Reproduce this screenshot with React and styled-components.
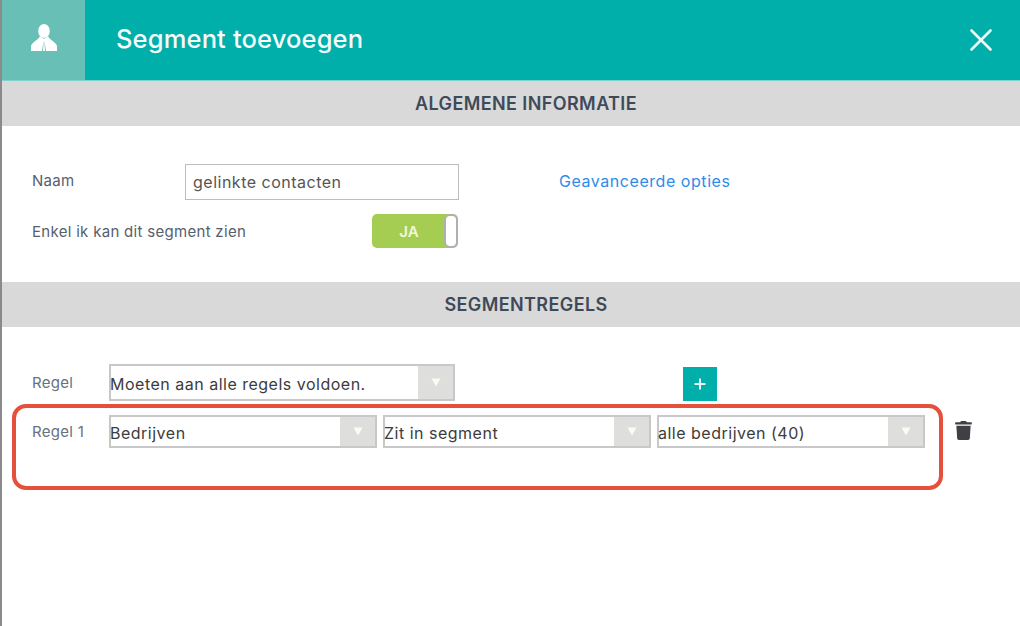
import React from "react";
import styled, { createGlobalStyle } from "styled-components";
import { FaTrash } from "react-icons/fa";

const Global = createGlobalStyle`
  html, body {
    margin: 0;
    padding: 0;
    background: #fff;
    overflow: hidden;
  }
  * { box-sizing: border-box; }
`;

const PersonIcon = () => (
  <svg width="28" height="28" viewBox="0 0 28 28" fill="#fff">
    <ellipse cx="14" cy="7" rx="5.8" ry="7" />
    <path d="M10 12 L14 15 L18 12 C19 15.5 26 18 27 22 L27 27 L1 27 L1 22 C2 18 9 15.5 10 12 Z" />
    <path fill="#68bfb5" d="M13.7 16 L12 27 L13 27 Z M14.3 16 L16 27 L15 27 Z" />
  </svg>
);

const Select = ({ width, value }) => (
  <SelectBox $width={width}>
    <SelectValue>{value}</SelectValue>
    <SelectArrow>
      <svg width="10" height="9" viewBox="0 0 10 9" fill="#fbfbf2">
        <path d="M0.5 0.5 L9.5 0.5 L5 8.5 Z" />
      </svg>
    </SelectArrow>
  </SelectBox>
);

export default function App() {
  return (
    <Page>
      <Global />
      <Header>
        <IconTile>
          <PersonIcon />
        </IconTile>
        <Title>Segment toevoegen</Title>
        <Close>
          <svg width="22" height="22" viewBox="0 0 22 22" stroke="#eef9f8" strokeWidth="2.6" strokeLinecap="round">
            <path d="M1.5 1.5 L20.5 20.5 M20.5 1.5 L1.5 20.5" />
          </svg>
        </Close>
      </Header>

      <Band>ALGEMENE INFORMATIE</Band>
      <InfoSection>
        <InfoRow>
          <InfoLabel>Naam</InfoLabel>
          <NameInput>gelinkte contacten</NameInput>
          <OptionsLink>Geavanceerde opties</OptionsLink>
        </InfoRow>
        <ToggleRow>
          <ToggleLabel>Enkel ik kan dit segment zien</ToggleLabel>
          <Toggle>
            <ToggleText>JA</ToggleText>
            <Knob />
          </Toggle>
        </ToggleRow>
      </InfoSection>

      <Band>SEGMENTREGELS</Band>
      <RulesSection>
        <RuleHead>
          <RuleLabel>Regel</RuleLabel>
          <Select width={346} value="Moeten aan alle regels voldoen." />
          <AddButton>
            <svg width="12" height="12" viewBox="0 0 12 12" stroke="#e6f6f4" strokeWidth="2">
              <path d="M6 0.5 V11.5 M0.5 6 H11.5" />
            </svg>
          </AddButton>
        </RuleHead>
        <RuleRow>
          <Highlight />
          <RuleLabel>Regel 1</RuleLabel>
          <Select width={268} value="Bedrijven" />
          <Select width={268} value="Zit in segment" />
          <Select width={268} value="alle bedrijven (40)" />
          <TrashButton>
            <FaTrash size={19} />
          </TrashButton>
        </RuleRow>
      </RulesSection>
    </Page>
  );
}

const Page = styled.div`
  width: 1020px;
  height: 626px;
  border-left: 2px solid #8a8a8a;
  background: #fff;
  font-family: "Inter", "Lato", sans-serif;
  overflow: hidden;
`;

const Header = styled.header`
  height: 81px;
  display: flex;
  align-items: center;
  background: #00aeaa;
  border-bottom: 1px solid #7fd3cf;
`;

const IconTile = styled.div`
  width: 83px;
  height: 100%;
  display: flex;
  align-items: center;
  justify-content: center;
  padding-bottom: 5px;
  background: #68bfb5;
`;

const Title = styled.h1`
  margin: 0 0 3px 31px;
  font-size: 25.5px;
  font-weight: 500;
  letter-spacing: 0.15px;
  color: #f4fbfb;
`;

const Close = styled.div`
  margin-left: auto;
  margin-right: 28px;
  display: flex;
`;

const Band = styled.div`
  height: 45px;
  display: flex;
  align-items: center;
  justify-content: center;
  padding: 0 0 0 30px;
  background: #d9d9d9;
  color: #3f4a59;
  font-size: 18px;
  font-weight: 600;
  letter-spacing: 0.4px;
`;

const InfoSection = styled.section`
  height: 156px;
  padding: 38px 0 0 30px;
`;

const InfoRow = styled.div`
  display: flex;
  align-items: center;
  height: 36px;
`;

const InfoLabel = styled.span`
  width: 153px;
  font-size: 15px;
  letter-spacing: 0.3px;
  color: #56606d;
  position: relative;
  top: -2px;
`;

const NameInput = styled.div`
  width: 274px;
  height: 36px;
  display: flex;
  align-items: center;
  padding-left: 7px;
  border: 1px solid #bdbdbd;
  font-size: 16px;
  letter-spacing: 0.5px;
  color: #555;
`;

const OptionsLink = styled.a`
  margin-left: 100px;
  font-size: 16px;
  letter-spacing: 0.55px;
  color: #2d8ceb;
  position: relative;
  top: -1px;
`;

const ToggleRow = styled.div`
  display: flex;
  align-items: center;
  justify-content: space-between;
  width: 426px;
  height: 34px;
  margin-top: 14px;
`;

const ToggleLabel = styled.span`
  font-size: 15px;
  letter-spacing: 0.3px;
  color: #56606d;
`;

const Toggle = styled.div`
  width: 86px;
  height: 34px;
  display: flex;
  border-radius: 5px;
  background: #a5cd52;
  overflow: hidden;
`;

const ToggleText = styled.span`
  flex: 1;
  display: flex;
  align-items: center;
  justify-content: center;
  padding-left: 2px;
  color: #f1f7df;
  font-size: 15px;
  font-weight: 600;
`;

const Knob = styled.span`
  width: 14px;
  background: #fff;
  border: 2px solid #b0b0b0;
  border-radius: 6px;
`;

const RulesSection = styled.section`
  padding: 37px 0 0 30px;
`;

const RuleHead = styled.div`
  display: flex;
  height: 37px;
  align-items: center;
  position: relative;
`;

const RuleLabel = styled.span`
  width: 77px;
  font-size: 15px;
  letter-spacing: 0.3px;
  color: #66717e;
`;

const SelectBox = styled.div`
  width: ${({ $width }) => $width}px;
  height: 100%;
  display: flex;
  border: 2px solid #c8c8c8;
  background: #fff;
`;

const SelectValue = styled.span`
  flex: 1;
  display: flex;
  align-items: center;
  padding-top: 2px;
  margin-left: -1px;
  font-size: 16px;
  letter-spacing: 0.5px;
  color: #3c3c3c;
`;

const SelectArrow = styled.span`
  width: 35px;
  display: flex;
  align-items: center;
  justify-content: center;
  background: #dededc;
`;

const AddButton = styled.button`
  width: 34px;
  height: 34px;
  margin: 3px 0 0 228px;
  padding: 0;
  display: flex;
  align-items: center;
  justify-content: center;
  border: none;
  background: #00aeaa;
`;

const RuleRow = styled.div`
  display: flex;
  align-items: center;
  gap: 6px;
  height: 33px;
  margin-top: 14px;
  position: relative;

  ${RuleLabel} {
    width: 71px;
  }
`;

const Highlight = styled.div`
  position: absolute;
  left: -20px;
  top: -11px;
  width: 931px;
  height: 86px;
  border: 4px solid #e5503c;
  border-radius: 14px;
  pointer-events: none;
`;

const TrashButton = styled.span`
  display: flex;
  margin: -3px 0 0 23px;
  color: #3f3f44;
`;
